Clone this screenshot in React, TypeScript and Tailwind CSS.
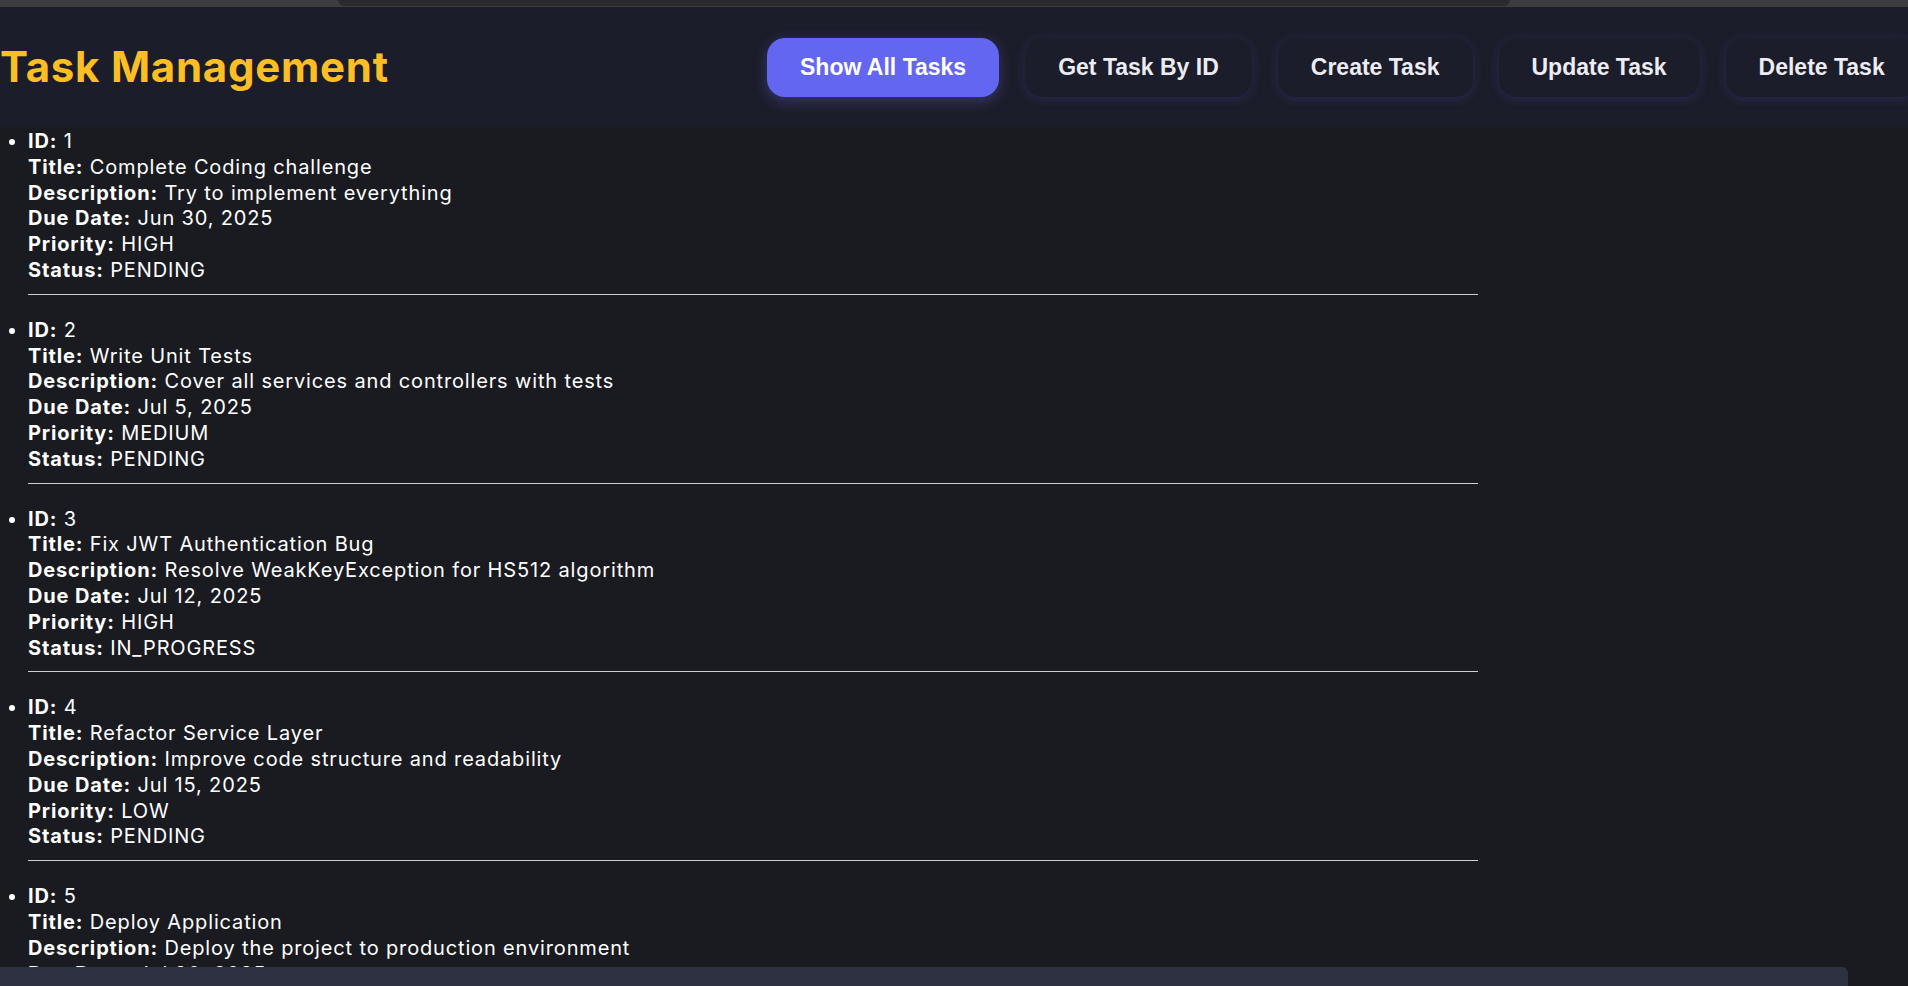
const tasks = [
  {
    id: 1,
    title: 'Complete Coding challenge',
    description: 'Try to implement everything',
    dueDate: 'Jun 30, 2025',
    priority: 'HIGH',
    status: 'PENDING',
  },
  {
    id: 2,
    title: 'Write Unit Tests',
    description: 'Cover all services and controllers with tests',
    dueDate: 'Jul 5, 2025',
    priority: 'MEDIUM',
    status: 'PENDING',
  },
  {
    id: 3,
    title: 'Fix JWT Authentication Bug',
    description: 'Resolve WeakKeyException for HS512 algorithm',
    dueDate: 'Jul 12, 2025',
    priority: 'HIGH',
    status: 'IN_PROGRESS',
  },
  {
    id: 4,
    title: 'Refactor Service Layer',
    description: 'Improve code structure and readability',
    dueDate: 'Jul 15, 2025',
    priority: 'LOW',
    status: 'PENDING',
  },
  {
    id: 5,
    title: 'Deploy Application',
    description: 'Deploy the project to production environment',
    dueDate: 'Jul 20, 2025',
    priority: 'MEDIUM',
    status: 'PENDING',
  },
];

const navItems = ['Show All Tasks', 'Get Task By ID', 'Create Task', 'Update Task', 'Delete Task'];

function Field({ label, value }: { label: string; value: string | number }) {
  return (
    <div>
      <strong className="font-bold">{label}:</strong> {value}
    </div>
  );
}

export default function App() {
  return (
    <div className="h-screen w-full overflow-hidden flex flex-col bg-[#1a1b20] font-['Inter','Noto_Sans',sans-serif]">
      {/* top strip */}
      <div className="h-[7px] shrink-0 bg-[#3c3c41]">
        <div className="ml-[338px] w-[1172px] h-[6px] rounded-b-md bg-[#2a2a2e]"></div>
      </div>

      {/* header */}
      <header className="h-[120px] shrink-0 flex items-center bg-[#1c1d2a]">
        <div className="w-[767px] shrink-0">
          <h1 className="text-[42px] font-bold text-[#fbbf24] leading-none tracking-[0.75px]">Task Management</h1>
        </div>
        <nav className="flex gap-[26px] shrink-0">
          {navItems.map((item, i) => (
            <button
              key={item}
              className={
                i === 0
                  ? "h-[59px] px-[33px] rounded-[18px] bg-[#6366f1] text-white text-[23px] font-bold font-['Liberation_Sans',Arial,sans-serif] shadow-[0_4px_14px_rgba(99,102,241,0.35)] whitespace-nowrap"
                  : "h-[59px] px-[33px] rounded-[18px] bg-[#1c1d2b] text-[#ececf2] text-[23px] font-bold font-['Liberation_Sans',Arial,sans-serif] shadow-[0_2px_12px_rgba(99,102,241,0.18)] whitespace-nowrap"
              }
            >
              {item}
            </button>
          ))}
        </nav>
      </header>

      {/* task list */}
      <main className="flex-1 overflow-hidden">
        <ul className="mt-[2px] w-[1478px] list-disc pl-[28px] text-[20px] leading-[25.8px] tracking-[0.85px] text-white">
          {tasks.map((task) => (
            <li key={task.id} className="mb-[23px]">
              <Field label="ID" value={task.id} />
              <Field label="Title" value={task.title} />
              <Field label="Description" value={task.description} />
              <Field label="Due Date" value={task.dueDate} />
              <Field label="Priority" value={task.priority} />
              <Field label="Status" value={task.status} />
              <hr className="mt-[10px] border-[#cfcfd3]" />
            </li>
          ))}
        </ul>
      </main>

      {/* bottom scrollbar */}
      <div className="h-[19px] shrink-0 flex">
        <div className="w-[1848px] h-full rounded-tr-md bg-[#2e3142]"></div>
      </div>
    </div>
  );
}
